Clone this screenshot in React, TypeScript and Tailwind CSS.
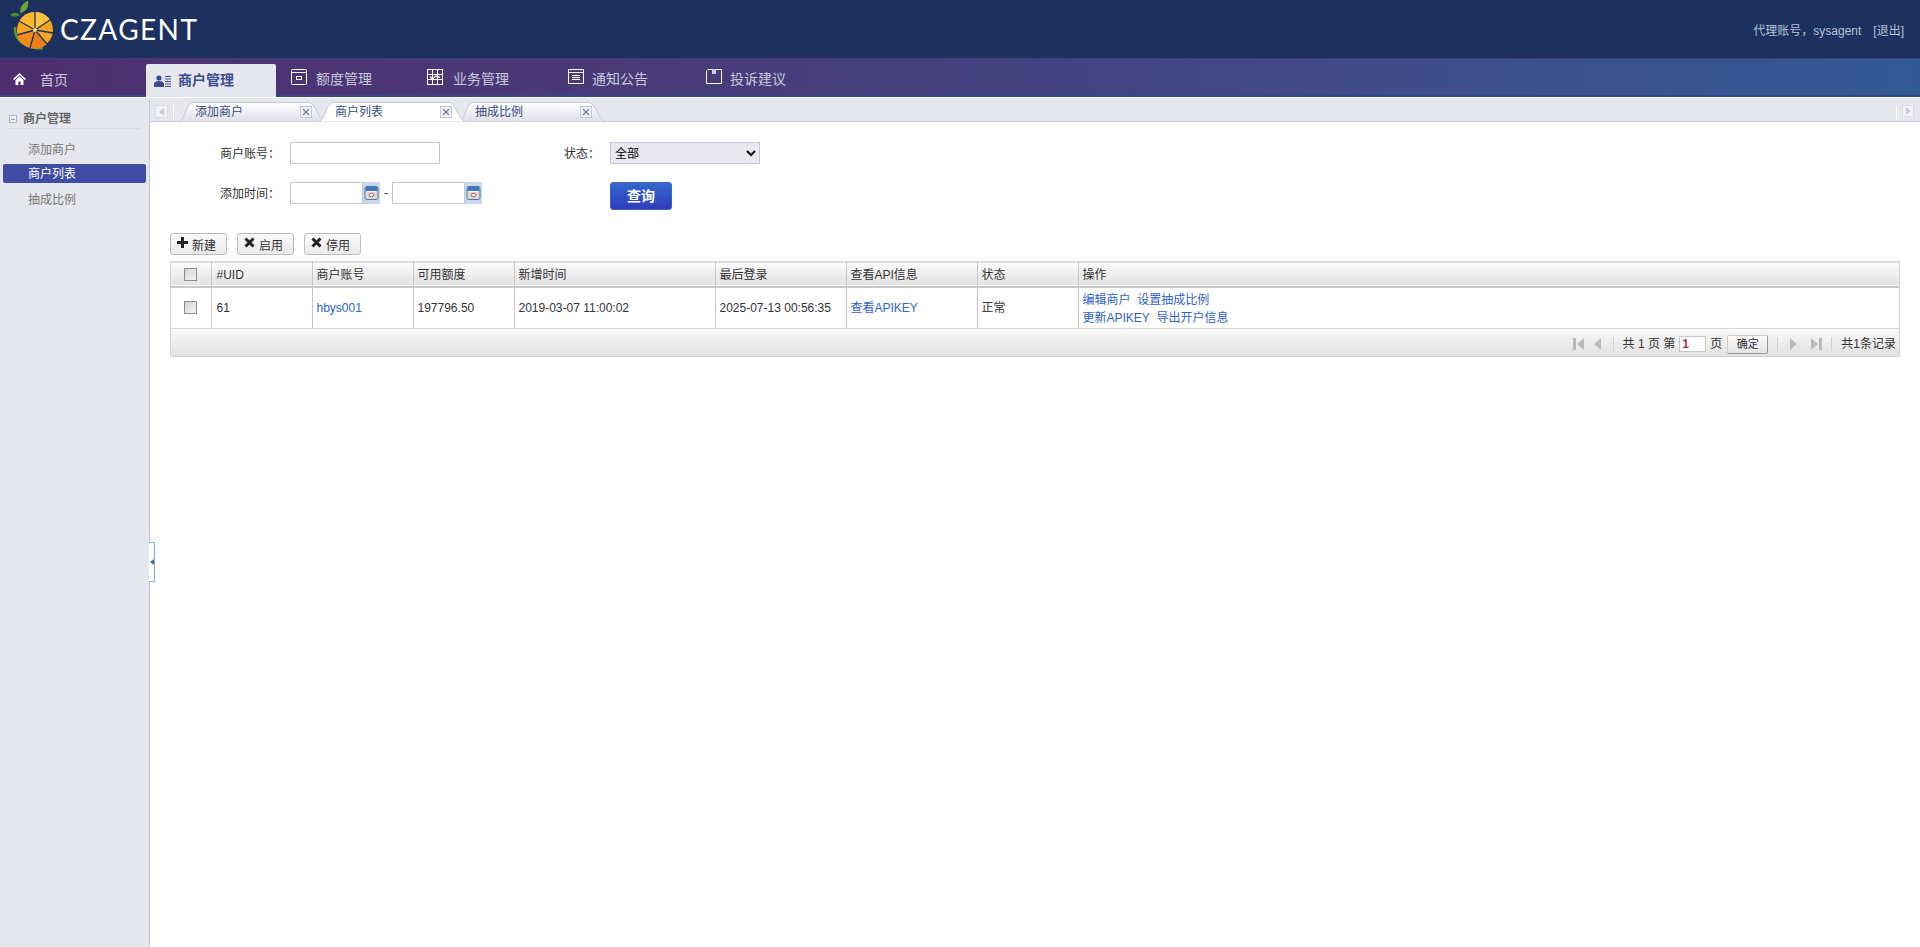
import { ReactNode } from "react";
import { X } from "lucide-react";

const BASE = "font-['Liberation_Sans','Noto_Sans_CJK_SC',sans-serif]";

const Logo = () => (
  <div className="flex h-[58px] w-[200px] items-center">
    <svg width="56" height="54" viewBox="0 0 56 54" className="ml-[4px] -mt-[4px] shrink-0">
      <path d="M11 27 C10 40 23 50 39 48" fill="none" stroke="#5d9a35" strokeWidth="2.5" />
      <g transform="translate(0 -2)">
        <circle cx="31" cy="32" r="18" fill="#f7a51f" />
        <path d="M31 32 L31 14 A18 18 0 0 1 46 22Z" fill="#fcc53c" />
        <path d="M31 32 L15 24 A18 18 0 0 1 31 14Z" fill="#fbb92e" />
        <path d="M31 32 L13 37 A18 18 0 0 0 26 50Z" fill="#f28c1c" />
        <path d="M31 32 L43 46 A18 18 0 0 1 26 50Z" fill="#ee7f18" />
        <g stroke="#1c3160" strokeWidth="1.3">
          <path d="M31 32 L31 14" />
          <path d="M31 32 L46 22" />
          <path d="M31 32 L49 35" />
          <path d="M31 32 L43 46" />
          <path d="M31 32 L26 50" />
          <path d="M31 32 L13 37" />
          <path d="M31 32 L15 23" />
        </g>
        <circle cx="31" cy="32" r="2" fill="#fde08a" />
      </g>
      <path d="M16 13 C16 6 20 2 24 1 C25 7 22 12 16 13Z" fill="#6aa832" />
      <path d="M6 15 C9 12 13 12 16 15 C12 17 9 17 6 15Z" fill="#4f8a2a" />
    </svg>
    <span className="font-['Lato',sans-serif] text-[28px] leading-none tracking-[1.4px] text-white">CZAGENT</span>
  </div>
);

const navItems = [
  {
    label: "额度管理",
    width: "w-[136px] ml-[15px]",
    gap: "ml-[9px]",
    icon: (
      <>
        <rect x="0.5" y="0.5" width="15" height="15" rx="1" />
        <path d="M0.5 3.5 H15.5" />
        <rect x="5.5" y="7.5" width="5" height="3" />
      </>
    ),
  },
  {
    label: "业务管理",
    width: "w-[141px]",
    gap: "ml-[10px]",
    icon: (
      <>
        <rect x="0.5" y="0.5" width="15" height="15" />
        <path d="M5.5 0.5 V15.5 M10.5 0.5 V15.5 M0.5 5.5 H15.5 M0.5 10.5 H15.5" />
        <path d="M3 8 L6 9.5 L9 7 L13 8.5" strokeWidth="1.5" />
      </>
    ),
  },
  {
    label: "通知公告",
    width: "w-[138px]",
    gap: "ml-[8px]",
    icon: (
      <>
        <rect x="0.5" y="0.5" width="15" height="14" />
        <path d="M0.5 3.5 H15.5 M4 6.5 H12 M4 8.5 H12 M4 10.5 H12" />
      </>
    ),
  },
  {
    label: "投诉建议",
    width: "w-[138px]",
    gap: "ml-[8px]",
    icon: (
      <>
        <path d="M2 0.5 H15.5 V14.5 H0.5 V2Z" />
        <rect x="6" y="0" width="4" height="5" fill="#c9cbe0" stroke="none" />
      </>
    ),
  },
];

const TopNav = () => (
  <div className="flex h-[39px] shrink-0 items-stretch border-t border-b-2 border-t-[#3d3c7c] border-b-[#2f4a8a] bg-gradient-to-r from-[#4f2e6f] via-[#45407f] to-[#325b95] text-[14px] text-[#c6c9dc]">
    <div className="flex w-[146px] items-center pl-[13px]">
      <svg width="13" height="12" viewBox="0 0 13 12" fill="#fff" className="mt-[4px] shrink-0">
        <path d="M6.5 0 L13 6 L11.8 7 L6.5 2.2 L1.2 7 L0 6Z" />
        <path d="M2.5 7 L6.5 3.5 L10.5 7 V12 H7.6 V8.5 H5.4 V12 H2.5Z" />
      </svg>
      <span className="ml-[14px] mt-[6px]">首页</span>
    </div>
    <div className="-mb-[2px] mt-[5px] flex w-[130px] items-center rounded-t-[2px] bg-[#e6e7ed] pl-[8px] font-bold text-[#3d4a94]">
      <svg width="17" height="12" viewBox="0 0 17 12" fill="#3d4a94" className="shrink-0">
        <circle cx="5" cy="3" r="2.6" />
        <path d="M0 12 V9 C0 7 2 6 5 6 C8 6 10 7 10 9 V12Z" />
        <path d="M11 1.5 H17 M11 4 H17 M11 6.5 H17 M11 9 H17 M11 11.5 H17" stroke="#3d4a94" />
      </svg>
      <span className="ml-[7px]">商户管理</span>
    </div>
    {navItems.map((n) => (
      <div key={n.label} className={`flex items-center ${n.width}`}>
        <svg width="16" height="16" viewBox="0 0 16 16" fill="none" stroke="#fff" className="shrink-0">
          {n.icon}
        </svg>
        <span className={`mt-[5px] ${n.gap}`}>{n.label}</span>
      </div>
    ))}
  </div>
);

const Sidebar = () => (
  <aside className="relative w-[150px] shrink-0 border-r border-[#c5c5d8] bg-[#e6e7ed] text-[12px]">
    <div className="mx-[9px] mt-[10px] flex h-[21px] items-center border-b border-[#d9dae2] pt-[2px] font-bold text-[#666]">
      <span className="flex h-[8px] w-[8px] items-center justify-center border border-[#a9b6cc] bg-[#eef0f6]">
        <span className="h-px w-[4px] bg-[#8a9ab5]" />
      </span>
      <span className="ml-[6px]">商户管理</span>
    </div>
    <div className="mt-[10px] flex flex-col">
      <div className="flex h-[20px] items-center pl-[28px] pt-[2px] text-[#777]">添加商户</div>
      <div className="ml-[3px] mt-[5px] flex h-[19px] w-[143px] items-center rounded-[2px] bg-[#414ca5] pl-[25px] pt-[1px] text-white">商户列表</div>
      <div className="mt-[6px] flex h-[20px] items-center pl-[28px] pt-[2px] text-[#777]">抽成比例</div>
    </div>
    <div className="absolute left-[149px] top-[444px] flex h-[40px] w-[6px] items-center justify-center rounded-r-[1px] border border-l-0 border-[#8fa8d8] bg-white">
      <span className="h-0 w-0 border-y-[3px] border-r-[4px] border-y-transparent border-r-[#3a6ea5]" />
    </div>
  </aside>
);

const Tab = ({ label, active }: { label: string; active?: boolean }) => (
  <div className={`relative flex h-[19px] w-[140px] items-center text-[12px] text-[#3b4a7f] ${active ? "z-10" : ""}`}>
    <svg width="146" height="20" viewBox="0 0 146 20" className="absolute -left-px top-0">
      <defs>
        <linearGradient id="tabgrad" x1="0" y1="0" x2="0" y2="1">
          <stop offset="0" stopColor="#ffffff" />
          <stop offset="1" stopColor="#dfe0e9" />
        </linearGradient>
      </defs>
      <path
        d="M0 19.5 C6 19 7 1 14 0.5 H130 C137 1 139 17 146 19.5"
        fill={active ? "#fff" : "url(#tabgrad)"}
        stroke="#c8c9d6"
      />
    </svg>
    <span className="relative ml-[15px]">{label}</span>
    <span className="relative ml-auto mr-[8px] flex h-[12px] w-[12px] shrink-0 items-center justify-center border border-[#c3c6d6] bg-[#f0f1f6]">
      <X size={10} strokeWidth={3} className="text-[#757a90]" />
    </span>
  </div>
);

const TabBar = () => (
  <div className="flex h-[24px] shrink-0 items-end border-b border-[#c5c5d8] bg-[#e6e7ed]">
    <div className="flex h-[19px] w-[30px] items-start pl-[5px] pt-[3px]">
      <span className="flex h-[13px] w-[13px] items-center justify-center border border-[#dcdde4] bg-[#f3f3f7]">
        <span className="h-0 w-0 border-y-[4px] border-r-[5px] border-y-transparent border-r-[#c7c8d2]" />
      </span>
      <span className="ml-[5px] h-[16px] w-px bg-white" />
    </div>
    <Tab label="添加商户" />
    <Tab label="商户列表" active />
    <Tab label="抽成比例" />
    <div className="ml-auto flex h-[19px] items-start pr-[6px] pt-[3px]">
      <span className="mr-[5px] h-[16px] w-px bg-white" />
      <span className="flex h-[12px] w-[12px] items-center justify-center border border-[#dcdde4] bg-[#f3f3f7]">
        <span className="h-0 w-0 border-y-[4px] border-l-[5px] border-y-transparent border-l-[#c7c8d2]" />
      </span>
    </div>
  </div>
);

const Calendar = () => (
  <span className="flex h-[22px] w-[17px] shrink-0 items-center justify-center bg-[#c9d7ea]">
    <svg width="15" height="16" viewBox="0 0 15 16">
      <rect x="1" y="1.5" width="13" height="13" rx="2" fill="#dddcd4" stroke="#4a79b5" />
      <rect x="1.5" y="2" width="12" height="4" fill="#3d78c0" />
      <path d="M3 6.5 H12" stroke="#fff" />
      <ellipse cx="7.5" cy="10" rx="2.5" ry="1.8" fill="#fff" stroke="#d05050" />
    </svg>
  </span>
);

const FORM_INPUT = "h-[22px] border border-[#c5c5d8] bg-white";
const FORM_LABEL = "flex h-[22px] items-center justify-end pr-[10px] pt-[2px]";

const SearchForm = () => (
  <div className="grid grid-cols-[140px_274px_46px_1fr] grid-rows-[22px_28px] gap-y-[18px] pt-[20px] text-[12px] text-[#333]">
    <div className={FORM_LABEL}>商户账号：</div>
    <div className={`${FORM_INPUT} w-[150px]`} />
    <div className="flex h-[22px] items-center pt-[2px]">状态：</div>
    <select className="h-[22px] w-[150px] border border-[#c5c5d8] bg-[#e8e8ee] pt-[2px] pl-0 text-[12px] text-black">
      <option>全部</option>
    </select>
    <div className={FORM_LABEL}>添加时间：</div>
    <div className="flex h-[22px] items-center">
      <div className={`${FORM_INPUT} w-[73px]`} />
      <Calendar />
      <span className="mx-[4px]">-</span>
      <div className={`${FORM_INPUT} w-[73px]`} />
      <Calendar />
    </div>
    <div />
    <button className="h-[28px] w-[62px] rounded-[3px] border border-[#3c62c4] bg-gradient-to-b from-[#3567cd] to-[#2f3cbc] pt-[1px] text-[14px] font-bold text-white">
      查询
    </button>
  </div>
);

const ToolButton = ({ icon, label }: { icon: ReactNode; label: string }) => (
  <button className="flex h-[22px] w-[57px] items-center rounded-[3px] border border-[#bdbdbd] bg-gradient-to-b from-[#fafafa] to-[#e9e9e9] pl-[6px] text-[12px] text-[#333]">
    {icon}
    <span className="ml-[4px] mt-[3px]">{label}</span>
  </button>
);

const PlusIcon = (
  <svg width="11" height="11" viewBox="0 0 11 11" className="-mt-[3px] shrink-0">
    <path d="M5.5 0 V11 M0 5.5 H11" stroke="#222" strokeWidth="3" />
  </svg>
);

const CrossIcon = (
  <svg width="11" height="11" viewBox="0 0 11 11" className="-mt-[4px] shrink-0">
    <path d="M1.5 1.5 L9.5 9.5 M9.5 1.5 L1.5 9.5" stroke="#222" strokeWidth="3" />
  </svg>
);

const COLS = ["40px", "101px", "101px", "101px", "201px", "131px", "131px", "101px"];

const Box = () => (
  <span className="mx-auto block h-[13px] w-[13px] border border-[#8e8e8e] bg-gradient-to-br from-[#d4d4d4] to-[#f5f5f5]" />
);

const HEAD = "border-r border-[#c8c8c8] px-[4px] pt-[2px] text-left font-normal";
const CELL = "border-r border-[#c8c8c8] px-[4px]";
const LINK = "text-[#2f62c9]";

const DataTable = () => (
  <div className="ml-[20px] mr-[20px] mt-[6px] border-x border-[#d4d4d4] text-[12px] text-[#333]">
    <table className="w-full table-fixed border-collapse">
      <colgroup>
        {COLS.map((c, i) => (
          <col key={i} width={c} />
        ))}
        <col />
      </colgroup>
      <thead>
        <tr className="h-[25px] border-y border-b-2 border-t-[#d4d4d4] border-b-[#c8c8c8] bg-gradient-to-b from-[#fafafa] to-[#e3e3e3]">
          <th className={HEAD}><Box /></th>
          <th className={`${HEAD} pl-[5px]`}>#UID</th>
          <th className={HEAD}>商户账号</th>
          <th className={HEAD}>可用额度</th>
          <th className={HEAD}>新增时间</th>
          <th className={HEAD}>最后登录</th>
          <th className={HEAD}>查看API信息</th>
          <th className={HEAD}>状态</th>
          <th className="px-[4px] pt-[2px] text-left font-normal">操作</th>
        </tr>
      </thead>
      <tbody>
        <tr className="h-[42px] border-b border-[#d4d4d4]">
          <td className={CELL}><Box /></td>
          <td className={`${CELL} pl-[5px]`}>61</td>
          <td className={`${CELL} ${LINK}`}>hbys001</td>
          <td className={CELL}>197796.50</td>
          <td className={CELL}>2019-03-07 11:00:02</td>
          <td className={CELL}>2025-07-13 00:56:35</td>
          <td className={`${CELL} ${LINK}`}>查看APIKEY</td>
          <td className={CELL}>正常</td>
          <td className={`px-[4px] pt-[2px] leading-[18px] ${LINK}`}>
            <div>编辑商户&nbsp; 设置抽成比例</div>
            <div>更新APIKEY&nbsp; 导出开户信息</div>
          </td>
        </tr>
      </tbody>
    </table>
    <Pager />
  </div>
);

const Sep = () => <span className="mx-[9px] h-[14px] w-px bg-[#c9cfdd]" />;

const PagerArrow = ({ dir, bar }: { dir: "l" | "r"; bar?: boolean }) => (
  <span className="flex w-[12px] items-center justify-center">
    {bar && dir === "l" && <span className="mr-px h-[12px] w-[3px] bg-[#bbb]" />}
    {dir === "l" ? (
      <span className="h-0 w-0 border-y-[6px] border-r-[7px] border-y-transparent border-r-[#bbb]" />
    ) : (
      <span className="h-0 w-0 border-y-[6px] border-l-[7px] border-y-transparent border-l-[#bbb]" />
    )}
    {bar && dir === "r" && <span className="ml-px h-[12px] w-[3px] bg-[#bbb]" />}
  </span>
);

const Pager = () => (
  <div className="flex h-[28px] items-center justify-end border-b border-[#d4d4d4] bg-gradient-to-b from-[#f8f8f8] to-[#e2e2e2] pr-[3px] pt-[3px] text-[12px] text-[#333]">
    <PagerArrow dir="l" bar />
    <span className="ml-[7px]" />
    <PagerArrow dir="l" />
    <Sep />
    <span>共 1 页 第</span>
    <span className="mx-[4px] flex h-[16px] w-[27px] items-center border border-[#c5c5d8] bg-white pl-[2px] font-bold text-[#a33]">1</span>
    <span>页</span>
    <span className="ml-[5px] flex h-[19px] w-[41px] items-center justify-center rounded-[2px] border border-[#ccc] border-b-[#999] border-r-[#999] bg-gradient-to-b from-[#fafafa] to-[#e4e4e4] text-[11px]">确定</span>
    <Sep />
    <PagerArrow dir="r" />
    <span className="ml-[11px]" />
    <PagerArrow dir="r" bar />
    <Sep />
    <span>共1条记录</span>
  </div>
);

export default function App() {
  return (
    <div className={`flex h-screen flex-col overflow-hidden bg-white ${BASE}`}>
      <header className="flex h-[58px] shrink-0 items-center justify-between bg-[#1c3160] pr-[16px]">
        <Logo />
        <div className="mt-[4px] text-[12px] text-[#b5c1d8]">
          代理账号，sysagent<span className="ml-[12px]">[退出]</span>
        </div>
      </header>
      <TopNav />
      <div className="flex min-h-0 flex-1 border-t border-white">
        <Sidebar />
        <main className="min-w-0 flex-1">
          <TabBar />
          <SearchForm />
          <div className="ml-[20px] mt-[23px] flex gap-[10px]">
            <ToolButton icon={PlusIcon} label="新建" />
            <ToolButton icon={CrossIcon} label="启用" />
            <ToolButton icon={CrossIcon} label="停用" />
          </div>
          <DataTable />
        </main>
      </div>
    </div>
  );
}
